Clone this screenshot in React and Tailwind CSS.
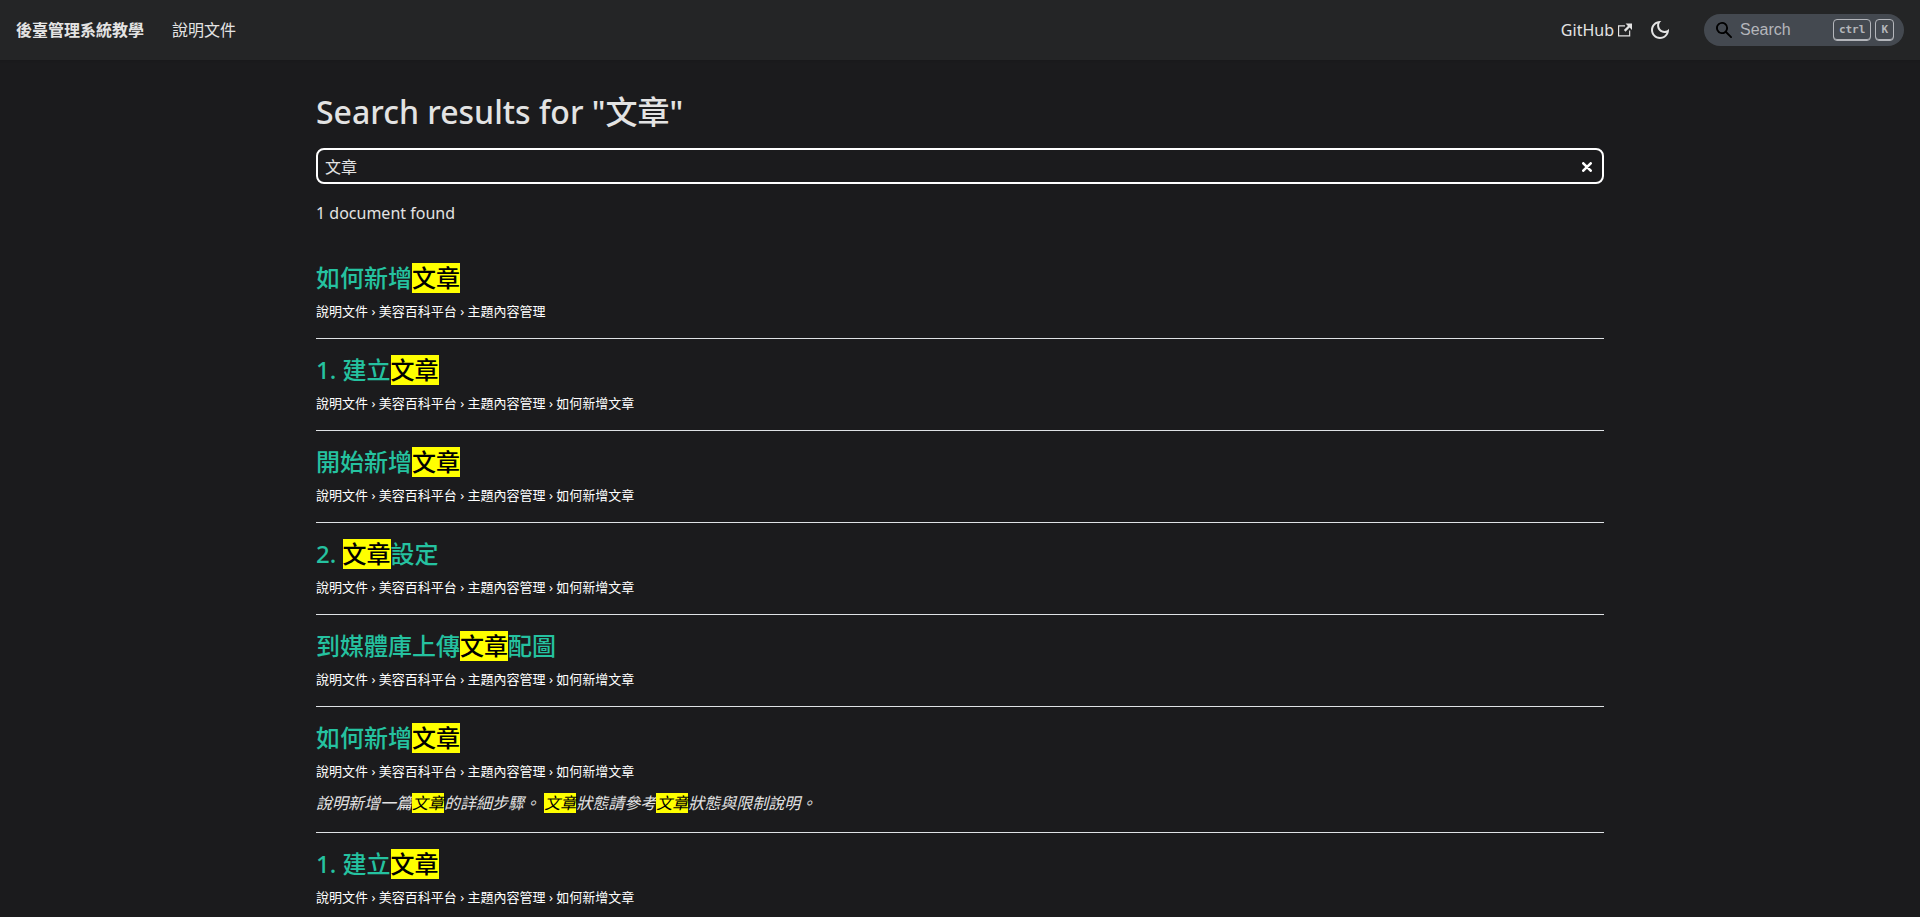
import React from 'react';

const DOCS = '說明文件';
const PLATFORM = '美容百科平台';
const TOPIC = '主題內容管理';
const ARTICLE = '如何新增文章';

const RESULTS = [
    { id: 1, title: '如何新增文章', path: [DOCS, PLATFORM, TOPIC] },
    { id: 2, title: '1. 建立文章', path: [DOCS, PLATFORM, TOPIC, ARTICLE] },
    { id: 3, title: '開始新增文章', path: [DOCS, PLATFORM, TOPIC, ARTICLE] },
    { id: 4, title: '2. 文章設定', path: [DOCS, PLATFORM, TOPIC, ARTICLE] },
    { id: 5, title: '到媒體庫上傳文章配圖', path: [DOCS, PLATFORM, TOPIC, ARTICLE] },
    {
        id: 6,
        title: '如何新增文章',
        path: [DOCS, PLATFORM, TOPIC, ARTICLE],
        summary: '說明新增一篇文章的詳細步驟。 文章狀態請參考文章狀態與限制說明。'
    },
    { id: 7, title: '1. 建立文章', path: [DOCS, PLATFORM, TOPIC, ARTICLE] }
];

const Highlight = ({ text, query }) => {
    if (!query) return text;

    return text.split(query).map((part, i) => (
        <React.Fragment key={i}>
            {i > 0 && <mark className="inline-block bg-[#ffff00] leading-tight text-black">{query}</mark>}
            {part}
        </React.Fragment>
    ));
};

const ExternalIcon = () => (
    <svg width="14" height="14" viewBox="0 0 24 24" fill="currentColor" aria-hidden="true">
        <path d="M21 13v10h-21v-19h12v2h-10v15h17v-8h2zm3-12h-10.988l4.035 4-6.977 7.07 2.828 2.828 6.977-7.07 4.125 4.172v-11z" />
    </svg>
);

const MoonIcon = () => (
    <svg width="24" height="24" viewBox="0 0 24 24" fill="currentColor" aria-hidden="true">
        <path d="M9.37,5.51C9.19,6.15,9.1,6.82,9.1,7.5c0,4.08,3.32,7.4,7.4,7.4c0.68,0,1.35-0.09,1.99-0.27C17.45,17.19,14.93,19,12,19 c-3.86,0-7-3.14-7-7C5,9.07,6.81,6.55,9.37,5.51z M12,3c-4.97,0-9,4.03-9,9s4.03,9,9,9s9-4.03,9-9c0-0.46-0.04-0.92-0.1-1.36 c-0.98,1.37-2.58,2.26-4.4,2.26c-2.98,0-5.4-2.42-5.4-5.4c0-1.81,0.89-3.42,2.26-4.4C12.92,3.04,12.46,3,12,3L12,3z" />
    </svg>
);

const SearchIcon = () => (
    <svg width="16" height="16" viewBox="0 0 16 16" fill="currentColor" aria-hidden="true">
        <path d="M6.02945,10.20327a4.17382,4.17382,0,1,1,4.17382-4.17382A4.15609,4.15609,0,0,1,6.02945,10.20327Zm9.69195,4.2199L10.8989,9.59979A5.88021,5.88021,0,0,0,12.058,6.02856,6.00467,6.00467,0,1,0,9.59979,10.8989l4.82338,4.82338a.89729.89729,0,0,0,1.29912,0,.89749.89749,0,0,0-.00087-1.29909Z" />
    </svg>
);

const Kbd = ({ children }) => (
    <kbd className="rounded border border-[#b4b6bb] px-[5px] font-['DejaVu_Sans_Mono',monospace] text-[11px] leading-5 font-bold text-[#b4b6bb] shadow-[inset_0_-1px_0_#b4b6bb]">
        {children}
    </kbd>
);

const Navbar = () => (
    <nav className="flex h-[60px] items-center justify-between bg-[#242526] px-4 shadow-[0_1px_2px_0_rgba(0,0,0,0.1)]">
        <div className="flex items-center gap-7">
            <a href="#home" className="font-bold">後臺管理系統教學</a>
            <a href="#docs">說明文件</a>
        </div>
        <div className="flex items-center">
            <a href="#github" className="flex items-center gap-1">
                GitHub
                <ExternalIcon />
            </a>
            <button type="button" aria-label="Switch theme" className="ml-3 flex size-8 cursor-pointer items-center justify-center">
                <MoonIcon />
            </button>
            <label className="ml-7 flex h-8 w-[200px] items-center rounded-full bg-[#444950] pr-[10px] pl-3 text-black">
                <SearchIcon />
                <input
                    type="text"
                    placeholder="Search"
                    aria-label="Search"
                    className="ml-2 w-0 flex-1 bg-transparent font-['Liberation_Sans',sans-serif] text-base text-[#e3e3e3] outline-none placeholder:text-[#b4b6bb]"
                />
                <span className="flex gap-1">
                    <Kbd>ctrl</Kbd>
                    <Kbd>K</Kbd>
                </span>
            </label>
        </div>
    </nav>
);

const SearchResult = ({ result, query }) => (
    <article className="border-b border-[#dfe2e5] py-4">
        <h2 className="text-2xl leading-[30px] font-medium text-[#25c2a0]">
            <a href={`#result-${result.id}`}>
                <Highlight text={result.title} query={query} />
            </a>
        </h2>
        <p className="mt-2 text-[13px] leading-[21px] text-white">{result.path.join(' › ')}</p>
        {result.summary && (
            <p className="mt-2 leading-[26px] italic">
                <Highlight text={result.summary} query={query} />
            </p>
        )}
    </article>
);

export default function App() {
    const [query, setQuery] = React.useState('文章');

    return (
        <div className="h-screen overflow-hidden bg-[#1b1b1d] font-['Noto_Sans','Noto_Sans_CJK_TC',sans-serif] text-base text-[#e3e3e3]">
            <Navbar />
            <main className="mx-auto max-w-[1320px] px-4 pt-8">
                <h1 className="text-[32px] leading-10 font-medium">Search results for "{query}"</h1>
                <div className="mt-4 flex h-9 items-center rounded-lg border-2 border-white pt-px pr-[10px] pl-[7px]">
                    <input
                        type="text"
                        aria-label="Search the documentation"
                        value={query}
                        onChange={(e) => setQuery(e.target.value)}
                        className="w-0 flex-1 bg-transparent outline-none"
                    />
                    <button type="button" aria-label="Clear" className="cursor-pointer text-white" onClick={() => setQuery('')}>
                        <svg width="10" height="10" viewBox="0 0 10 10" stroke="currentColor" strokeWidth="2.6" strokeLinecap="round">
                            <path d="M1.3 1.3 8.7 8.7M8.7 1.3 1.3 8.7" />
                        </svg>
                    </button>
                </div>
                <p className="mt-4 mb-5 leading-[27px]">1 document found</p>
                <section>
                    {RESULTS.map((result) => (
                        <SearchResult key={result.id} result={result} query={query} />
                    ))}
                </section>
            </main>
        </div>
    );
}
